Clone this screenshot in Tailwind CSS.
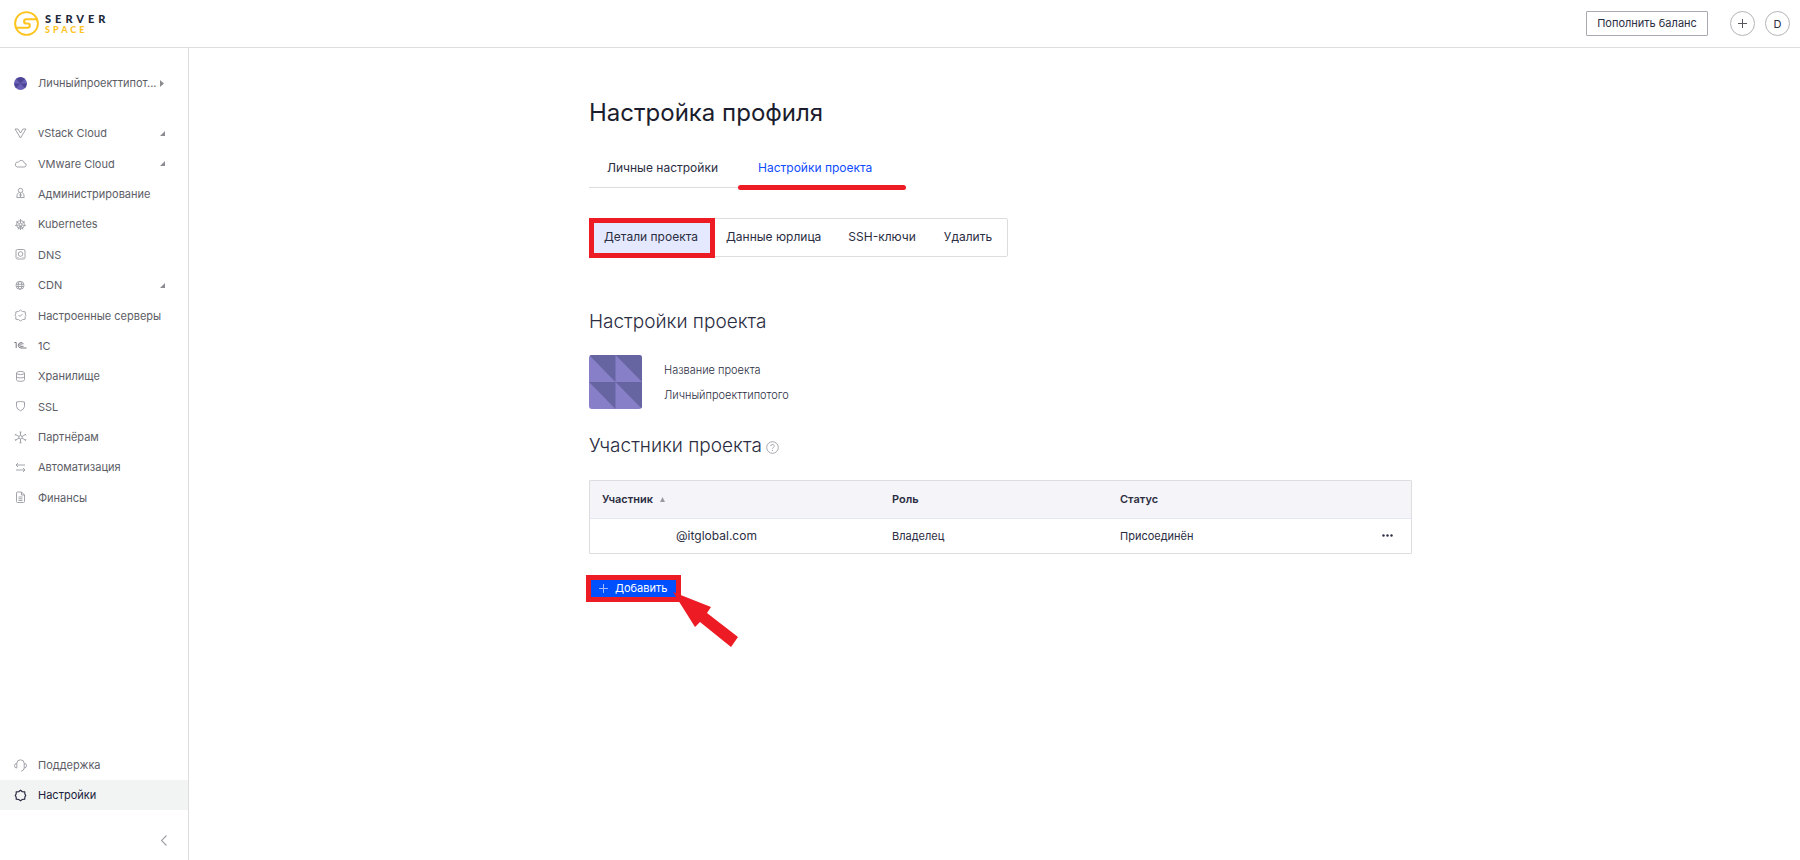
<!DOCTYPE html>
<html lang="ru">
<head>
<meta charset="utf-8">
<title>Настройка профиля</title>
<script src="https://cdn.jsdelivr.net/npm/@tailwindcss/browser@4"></script>
</head>
<body class="flex min-h-screen flex-col bg-white font-['Inter','Liberation_Sans',sans-serif] text-[11px] leading-4 text-[#2b2d42]">
<header class="flex h-12 items-center border-b border-[#dddddf] pr-[10px] pl-[14px]">
  <a href="#" class="flex items-center gap-[6px]" aria-label="Serverspace">
    <svg class="size-[25px]" viewBox="0 0 25 25" fill="none" stroke="#fdc41f" stroke-width="1.9"><circle cx="12.5" cy="12.5" r="11.4"/><path d="M23.500 8.300H12.200a2.100 2.100 0 0 0-2.100 2.100q0 2.100 2.100 2.100h1.500q2.100 0 2.100 2.100a2.100 2.100 0 0 1-2.100 2.100H1.600" stroke-width="2.1"/></svg>
    <span class="flex flex-col font-['Lato','Inter',sans-serif] font-black">
      <span class="text-[11px] leading-3 tracking-[4px] text-[#20283a]">SERVER</span>
      <span class="text-[9px] leading-[10px] tracking-[3px] text-[#fdc41f]">SPACE</span>
    </span>
  </a>
  <button class="ml-auto h-[25px] w-[122px] rounded-[1px] border border-[#a9a9b0] pb-px">Пополнить баланс</button>
  <button class="ml-[22px] grid size-[25px] place-items-center rounded-full border border-[#b4b4ba]" aria-label="Создать"><svg class="size-[11px]" viewBox="0 0 11 11" stroke="#55565f"><path d="M5.5 1v9M1 5.5h9"/></svg></button>
  <button class="ml-[10px] grid size-[25px] place-items-center rounded-full border border-[#b4b4ba]">D</button>
</header>
<div class="flex flex-1">
  <aside class="flex w-[189px] shrink-0 flex-col border-r border-[#dddddf] text-[#5c5d66]">
    <a href="#" class="mt-5 flex h-[30px] items-center pl-[14px]">
      <svg class="mr-[11px] size-[13px]" viewBox="0 0 14 14"><circle cx="7" cy="7" r="7" fill="#6a60b8"/><path d="M2 2l5 5V0zM7 0l5 2-5 5zM0 7h7l-5 5zM7 7h7l-2 5z" fill="#3f3a83" opacity=".7"/></svg>
      Личныйпроекттипот...
      <svg class="ml-1 h-[7px] w-1" viewBox="0 0 4 7" fill="#8c8d93"><path d="M0 0l4 3.500-4 3.500z"/></svg>
    </a>
    <nav class="mt-5 flex h-[395px] flex-col stroke-[#999aa1]">
      <a href="#" class="flex flex-1 items-center gap-[11px] pr-[23px] pl-[14px]"><svg class="size-[13px]" viewBox="0 0 13 13" fill="none"><path d="M1 2h3l2.500 4L9 2h3L6.500 11z" stroke-width=".9"/></svg>vStack Cloud<svg class="ml-auto size-[5px]" viewBox="0 0 5 5"><path d="M5 0v5H0z" fill="#8c8d93" stroke="none"/></svg></a>
      <a href="#" class="flex flex-1 items-center gap-[11px] pr-[23px] pl-[14px]"><svg class="size-[13px]" viewBox="0 0 13 13" fill="none"><path d="M3.200 10h6.800a2 2 0 0 0 .3-4 3 3 0 0 0-5.700-.9A2.500 2.500 0 1 0 3.200 10z" stroke-width=".9"/></svg>VMware Cloud<svg class="ml-auto size-[5px]" viewBox="0 0 5 5"><path d="M5 0v5H0z" fill="#8c8d93" stroke="none"/></svg></a>
      <a href="#" class="flex flex-1 items-center gap-[11px] pl-[14px]"><svg class="size-[13px]" viewBox="0 0 13 13" fill="none" stroke-width=".9"><circle cx="6.500" cy="3.500" r="2.200"/><path d="M4.600 5.500Q2.800 7 2.800 10.500h7.400Q10.200 7 8.400 5.500M6.500 6v4M5 8h3"/></svg>Администрирование</a>
      <a href="#" class="flex flex-1 items-center gap-[11px] pl-[14px]"><svg class="size-[13px]" viewBox="0 0 13 13" fill="none" stroke-width=".9"><circle cx="6.500" cy="6.500" r="4"/><circle cx="6.500" cy="6.500" r="1.300"/><path d="M6.500 1v4M6.500 8v4M2 3.500l3.200 2M11 3.500l-3.200 2M1 7.500l4-.5M12 7.500l-4-.5M4 11.500l1.800-3.800M9 11.500L7.200 7.700"/></svg>Kubernetes</a>
      <a href="#" class="flex flex-1 items-center gap-[11px] pl-[14px]"><svg class="size-[13px]" viewBox="0 0 13 13" fill="none" stroke-width=".9"><rect x="2" y="1.500" width="9" height="9.500" rx="1.500"/><circle cx="6.500" cy="6" r="2.300"/><path d="M3.500 9.500h1M8.500 9.500h1"/></svg>DNS</a>
      <a href="#" class="flex flex-1 items-center gap-[11px] pr-[23px] pl-[14px]"><svg class="size-[13px]" viewBox="0 0 13 13" fill="none" stroke-width=".9"><circle cx="6" cy="6.300" r="4"/><ellipse cx="6" cy="6.300" rx="1.800" ry="4"/><path d="M2 5.300h8M2 7.500h8"/></svg>CDN<svg class="ml-auto size-[5px]" viewBox="0 0 5 5"><path d="M5 0v5H0z" fill="#8c8d93" stroke="none"/></svg></a>
      <a href="#" class="flex flex-1 items-center gap-[11px] pl-[14px]"><svg class="size-[13px]" viewBox="0 0 13 13" fill="none" stroke-width=".9"><path d="M6.500 1L8.300 2.500l2.900.3.200 2.500.6.900-.8 1.300v2.700l-2.700.4-2 1.500-2-1.500-2.700-.4V7.500L1 6.200l.8-1.400V2.900l2.700-.4zM4.500 6l1.500 1.500 2.500-2.500"/></svg>Настроенные серверы</a>
      <a href="#" class="flex flex-1 items-center gap-[11px] pl-[14px]"><svg class="size-[13px]" viewBox="0 0 13 13" fill="none" stroke="#777880"><path d="M.3 3.500h1.900V9M9.500 5.200A2.700 2.700 0 1 0 7 9h5.500M8 5.600a1.200 1.200 0 1 0-1 1.700h2.500"/></svg>1С</a>
      <a href="#" class="flex flex-1 items-center gap-[11px] pl-[14px]"><svg class="size-[13px]" viewBox="0 0 13 13" fill="none" stroke-width=".9"><ellipse cx="6.500" cy="3" rx="4" ry="1.600"/><path d="M2.500 3v6.800c0 2 8 2 8 0V3M2.500 6.500c0 1.800 8 1.800 8 0"/></svg>Хранилище</a>
      <a href="#" class="flex flex-1 items-center gap-[11px] pl-[14px]"><svg class="size-[13px]" viewBox="0 0 13 13" fill="none" stroke-width=".9"><path d="M2.500 2Q6.500 1 10.500 2v4.500Q10 9.500 6.500 10.800 3 9.500 2.500 6.500z"/></svg>SSL</a>
      <a href="#" class="flex flex-1 items-center gap-[11px] pl-[14px]"><svg class="size-[13px]" viewBox="0 0 13 13" fill="none" stroke-width=".9"><circle cx="6.500" cy="6.300" r="1.700"/><path d="M6.500 1v3.500M6.500 8v4M1.500 3.500l3.500 2M11.500 3.500L8 5.500M1.500 9L5 7.200M11.500 9L8 7.200M5.500 1h2M5.500 11.800h2M1 4.500l1-1.700M12 4.500l-1-1.700M1 8.200L2 10M12 8.200L11 10"/></svg>Партнёрам</a>
      <a href="#" class="flex flex-1 items-center gap-[11px] pl-[14px]"><svg class="size-[13px]" viewBox="0 0 13 13" fill="none" stroke-width=".9"><path d="M11 4H2M4 2L2 4l2 2M2 9h9M9 7l2 2-2 2"/></svg>Автоматизация</a>
      <a href="#" class="flex flex-1 items-center gap-[11px] pl-[14px]"><svg class="size-[13px]" viewBox="0 0 13 13" fill="none" stroke-width=".9"><path d="M7.500 1H3.500q-1 0-1 1v8.500q0 1 1 1h6q1 0 1-1V4zM7.500 1v3h3M4.500 6h4M4.500 7.800h4M4.500 9.500h4"/></svg>Финансы</a>
    </nav>
    <div class="mt-auto flex flex-col">
      <a href="#" class="flex h-[30px] items-center gap-[11px] pl-[14px]"><svg class="size-[13px]" viewBox="0 0 13 13" fill="none" stroke="#999aa1" stroke-width=".9"><path d="M2.800 9V4.500a3.700 3.700 0 0 1 7.400 0v4.500q0 2.500-3 3.200M2.800 4.500Q.5 4.300.5 6.700T2.800 9M10.200 4.500q2.300-.2 2.300 2.200T10.200 9"/></svg>Поддержка</a>
      <a href="#" class="flex h-[30px] items-center gap-[11px] bg-[#f2f4f4] pl-[14px] text-[#20223a]"><svg class="size-[13px]" viewBox="0 0 13 13" fill="none" stroke="#2b2d42" stroke-width="1.200"><path d="M6.500 1.300L8.200 2.600l2.500.2.200 2.300.8 1.400-.8 1.500-.2 2.200-2.500.3-1.700 1.200-1.700-1.200-2.500-.3-.2-2.200-.8-1.500.8-1.400.2-2.300 2.500-.2z"/></svg>Настройки</a>
      <button class="flex h-[50px] items-center justify-end pr-[21px] pt-[10px]" aria-label="Свернуть меню"><svg class="h-[11px] w-[6px]" viewBox="0 0 6 11" fill="none" stroke="#a2a3a9" stroke-width="1.200"><path d="M5.5.5l-5 5 5 5"/></svg></button>
    </div>
  </aside>
  <main class="flex-1 pl-3">
    <div class="mx-auto flex max-w-[823px] flex-col items-start pt-[49px]">
      <h1 class="text-2xl leading-8 text-[#1b1d2e]">Настройка профиля</h1>
      <div class="mt-[19px] flex h-[40px] border-b border-[#dddddf] text-xs">
        <button class="w-[149px] pl-[18px] text-left">Личные настройки</button>
        <button class="relative px-5 text-[#0f4cff]">Настройки проекта<span class="absolute top-[37px] left-0 h-[5px] w-[168px] rounded-full bg-[#ed1c24]"></span></button>
      </div>
      <div class="relative mt-[30px] flex h-[39px] rounded-[2px] border border-[#dddddf] text-xs">
        <button class="w-[122px] bg-[#e4e9ff] pb-[2px] whitespace-nowrap">Детали проекта</button>
        <button class="px-[14px] pb-[2px]">Данные юрлица</button>
        <button class="px-[13px] pb-[2px]">SSH-ключи</button>
        <button class="px-[15px] pb-[2px]">Удалить</button>
        <span class="pointer-events-none absolute -top-px -left-px h-10 w-[126px] border-5 border-[#ed1c24]"></span>
      </div>
      <h2 class="mt-[53px] text-[19px] leading-6 font-light">Настройки проекта</h2>
      <div class="mt-[21px] flex items-center gap-[22px]">
        <svg class="h-[54px] w-[53px] rounded-[3px]" viewBox="0 0 54 54" preserveAspectRatio="none"><path fill="#8780c8" d="M0 0h54v54H0z"/><path fill="#6764a2" d="M0 0h27v27zM27 0h27v27zM0 27h27v27zM27 27h27v27z"/></svg>
        <dl class="flex flex-col gap-[9px] font-light"><dt>Название проекта</dt><dd>Личныйпроекттипотого</dd></dl>
      </div>
      <h2 class="mt-[25px] flex items-center gap-1 text-[19px] leading-6 font-light">Участники проекта
        <svg class="mt-[2px] size-[13px]" viewBox="0 0 13 13" fill="none" stroke="#a5a6ac"><circle cx="6.500" cy="6.500" r="5.800"/><path d="M4.800 5.200a1.700 1.700 0 1 1 2.500 1.400q-.8.400-.8 1.200M6.500 9v1"/></svg>
      </h2>
      <div class="mt-[22px] w-full rounded-[1px] border border-[#dddddf]">
        <table class="w-full table-fixed text-left">
          <thead class="bg-[#f5f5f9]"><tr class="h-[37px] border-b border-[#e1e8f9]">
            <th class="w-[290px] pl-3 font-semibold"><span class="flex items-center gap-[7px]">Участник<svg class="size-[5px]" viewBox="0 0 5 5" fill="#9a9ba2"><path d="M2.500 0L5 5H0z"/></svg></span></th>
            <th class="w-[228px] pl-3 font-semibold">Роль</th><th class="pl-3 font-semibold">Статус</th><th class="w-12"></th></tr></thead>
          <tbody><tr class="h-[35px]">
            <td class="pl-[86px] text-xs">@itglobal.com</td><td class="pl-3">Владелец</td><td class="pl-3">Присоединён</td>
            <td><button class="grid h-6 w-12 place-items-center" aria-label="Действия"><svg class="h-[3px] w-[11px]" viewBox="0 0 11 3" fill="#2b2d42"><circle cx="1.500" cy="1.500" r="1.200"/><circle cx="5.500" cy="1.500" r="1.200"/><circle cx="9.500" cy="1.500" r="1.200"/></svg></button></td></tr></tbody>
        </table>
      </div>
      <div class="relative mt-6">
        <button class="flex h-[21px] w-[90px] items-center gap-[7px] bg-[#0050ff] pb-px pl-[10px] text-white"><svg class="size-[9px]" viewBox="0 0 9 9" stroke="#9db8ff"><path d="M4.500 0v9M0 4.500h9"/></svg>Добавить</button>
        <span class="pointer-events-none absolute -top-[3px] -left-[3px] h-[27px] w-[95px] border-5 border-[#ed1c24]"></span>
        <svg class="pointer-events-none absolute top-[14px] left-[84px] h-[56px] w-[68px]" viewBox="0 0 68 56" fill="#ed1c24"><path d="M0 0l38 15-4 6 31 24-7 10-31-25-5 5z"/></svg>
      </div>
    </div>
  </main>
</div>
</body>
</html>
